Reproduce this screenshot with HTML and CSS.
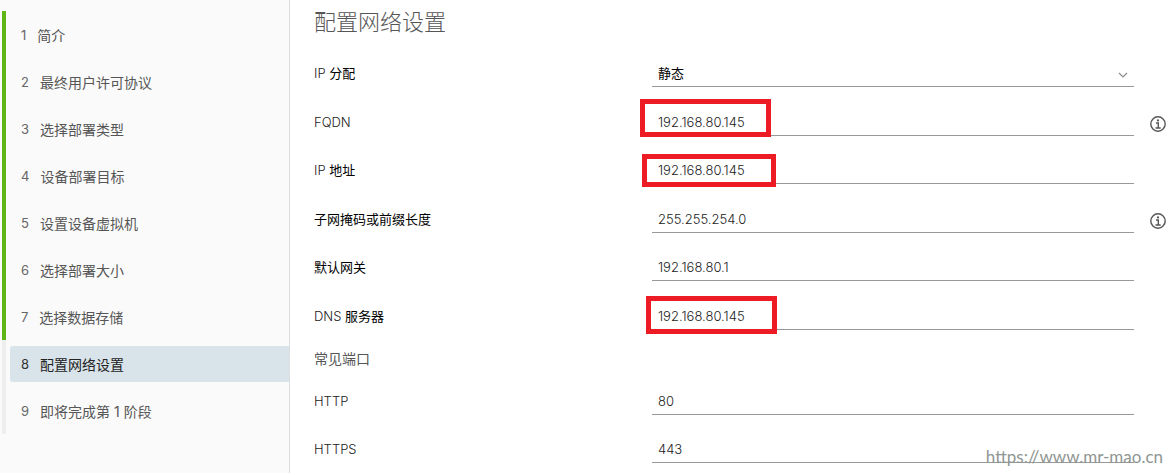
FILE: index.html
```html
<!DOCTYPE html>
<html lang="zh-CN">
<head>
    <meta charset="UTF-8">
    <meta name="viewport" content="width=device-width, initial-scale=1.0">
    <title>配置网络设置</title>
    <link rel="stylesheet" href="styles.css">
</head>
<body>

<div class="wizard">
    <nav class="sidebar">
        <ol class="steps">
            <li class="done"><a href="#"><span class="num">1</span>简介</a></li>
            <li class="done"><a href="#"><span class="num">2</span>最终用户许可协议</a></li>
            <li class="done"><a href="#"><span class="num">3</span>选择部署类型</a></li>
            <li class="done"><a href="#"><span class="num">4</span>设备部署目标</a></li>
            <li class="done"><a href="#"><span class="num">5</span>设置设备虚拟机</a></li>
            <li class="done"><a href="#"><span class="num">6</span>选择部署大小</a></li>
            <li class="done"><a href="#"><span class="num">7</span>选择数据存储</a></li>
            <li class="active"><a href="#" aria-current="step"><span class="num">8</span>配置网络设置</a></li>
            <li><a href="#"><span class="num">9</span>即将完成第 1 阶段</a></li>
        </ol>
    </nav>

    <main class="content">
        <h1>配置网络设置</h1>

        <form>
            <div class="rows">
                <div class="form-row">
                    <label for="ip-mode"><span class="latin">IP</span> 分配</label>
                    <div class="field">
                        <select id="ip-mode">
                            <option selected>静态</option>
                            <option>DHCP</option>
                        </select>
                        <svg class="chevron" viewBox="0 0 10 6" width="10" height="6" aria-hidden="true"><path d="M1 1l4 4 4-4" fill="none" stroke="#8c8c8c" stroke-width="1.2"/></svg>
                    </div>
                </div>
                <div class="form-row">
                    <label for="fqdn"><span class="latin">FQDN</span></label>
                    <div class="field">
                        <input type="text" id="fqdn" value="192.168.80.145">
                        <span class="mark mark-fqdn"></span>
                    </div>
                    <button type="button" class="info" aria-label="FQDN">
                        <svg viewBox="0 0 16 16" width="16" height="16"><circle cx="8" cy="8" r="7.2" fill="none" stroke="#565656" stroke-width="1.4"/><circle cx="8" cy="4.4" r="1.1" fill="#565656"/><path d="M6 7h2.3v4.7M5.5 12h5.2" fill="none" stroke="#565656" stroke-width="1.4"/></svg>
                    </button>
                </div>
                <div class="form-row">
                    <label for="ip"><span class="latin">IP</span> 地址</label>
                    <div class="field">
                        <input type="text" id="ip" value="192.168.80.145">
                        <span class="mark mark-ip"></span>
                    </div>
                </div>
                <div class="form-row">
                    <label for="mask">子网掩码或前缀长度</label>
                    <div class="field">
                        <input type="text" id="mask" value="255.255.254.0">
                    </div>
                    <button type="button" class="info" aria-label="子网掩码或前缀长度">
                        <svg viewBox="0 0 16 16" width="16" height="16"><circle cx="8" cy="8" r="7.2" fill="none" stroke="#565656" stroke-width="1.4"/><circle cx="8" cy="4.4" r="1.1" fill="#565656"/><path d="M6 7h2.3v4.7M5.5 12h5.2" fill="none" stroke="#565656" stroke-width="1.4"/></svg>
                    </button>
                </div>
                <div class="form-row">
                    <label for="gateway">默认网关</label>
                    <div class="field">
                        <input type="text" id="gateway" value="192.168.80.1">
                    </div>
                </div>
                <div class="form-row">
                    <label for="dns"><span class="latin">DNS</span> 服务器</label>
                    <div class="field">
                        <input type="text" id="dns" value="192.168.80.145">
                        <span class="mark mark-dns"></span>
                    </div>
                </div>
            </div>

            <h2>常见端口</h2>

            <div class="ports">
                <div class="form-row">
                    <label for="http"><span class="latin">HTTP</span></label>
                    <div class="field">
                        <input type="text" id="http" value="80">
                    </div>
                </div>
                <div class="form-row">
                    <label for="https"><span class="latin">HTTPS</span></label>
                    <div class="field">
                        <input type="text" id="https" value="443">
                    </div>
                </div>
            </div>
        </form>
    </main>
</div>

<div class="watermark">https://www.mr-mao.cn</div>

</body>
</html>
```

FILE: styles.css
```css
* {
    box-sizing: border-box;
}

body {
    margin: 0;
    font-family: Inter, "Noto Sans CJK SC", sans-serif;
    font-size: 13px;
    color: #565656;
    background-color: #fff;
}

.wizard {
    display: flex;
    min-height: 100vh;
}

.sidebar {
    flex: 0 0 290px;
    padding: 11px 0 0 2px;
    background-color: #fafafa;
    border-right: 1px solid #ddd;
}

.steps {
    list-style: none;
    margin: 0;
    padding: 0;
}

.steps li {
    padding: 6px 0 5px 4px;
    border-left: 4px solid #eee;
}

.steps li.done {
    border-left-color: #5eb715;
}

.steps a {
    display: flex;
    height: 36px;
    padding-left: 11px;
    align-items: center;
    font-size: 14px;
    color: #565656;
    text-decoration: none;
    white-space: pre;
    border-radius: 3px 0 0 3px;
}

.steps .num {
    margin-right: 11px;
    font-size: 13px;
    color: #666;
}

.steps .active a {
    background-color: #d9e4ea;
    color: #222;
}

.steps .active .num {
    color: #333;
}

.content {
    flex: 1;
    padding: 6px 4px 0 24px;
}

h1 {
    margin: 0;
    font-size: 22px;
    line-height: 33px;
    font-weight: 300;
    color: #565656;
}

h2 {
    margin: 0;
    padding-top: 20px;
    font-size: 14px;
    line-height: 17px;
    font-weight: 400;
}

.form-row {
    display: grid;
    grid-template-columns: 338px 1fr 16px;
    align-items: end;
    height: 48px;
}

.rows .form-row:nth-child(even) {
    height: 49px;
}

.form-row label {
    line-height: 24px;
    padding-bottom: 2px;
    color: #000;
}

.latin {
    font-weight: 300;
    color: #222;
}

.field {
    position: relative;
    margin-right: 16px;
}

.field input,
.field select {
    display: block;
    width: 100%;
    height: 26px;
    padding: 0 6px 1px;
    border: none;
    border-bottom: 1px solid #999;
    border-radius: 0;
    outline: none;
    background: transparent;
    font-family: inherit;
    font-size: 13px;
    font-weight: 300;
    color: #222;
}

.field select {
    appearance: none;
    font-weight: 400;
    color: #000;
}

.chevron {
    position: absolute;
    right: 6px;
    top: 11px;
    pointer-events: none;
}

.info {
    width: 16px;
    height: 16px;
    margin-bottom: 4px;
    padding: 0;
    border: none;
    background: none;
    cursor: pointer;
}

.info svg {
    display: block;
}

/* красные рамки поверх полей */
.mark {
    position: absolute;
    width: 131px;
    height: 38px;
    border: 5px solid #ed1c24;
    pointer-events: none;
}

.mark-fqdn {
    left: -12px;
    bottom: -1px;
}

.mark-ip {
    left: -10px;
    bottom: -3px;
    width: 134px;
    height: 33px;
}

.mark-dns {
    left: -6px;
    bottom: -4px;
}

.watermark {
    position: absolute;
    right: 7px;
    bottom: 4px;
    font-family: Lato, sans-serif;
    font-size: 17px;
    line-height: 24px;
    color: #8f9693;
}
```
